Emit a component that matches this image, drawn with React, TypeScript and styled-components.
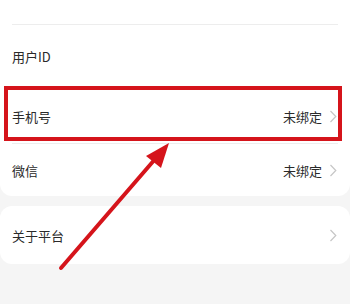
import React from "react";
import styled, { createGlobalStyle } from "styled-components";

const Global = createGlobalStyle`
  html, body { margin: 0; padding: 0; background: #f5f5f5; }
  body { font-family: "Noto Sans CJK SC", "Noto Sans", sans-serif; }
`;

const Page = styled.div`
  position: relative;
  width: 350px;
  height: 304px;
  overflow: hidden;
  background: #f5f5f5;
  display: flex;
  flex-direction: column;
`;

const Card = styled.div<{ $top?: number }>`
  background: #ffffff;
  border-radius: ${(p) => (p.$top !== undefined ? "12px" : "0 0 12px 12px")};
  margin-top: ${(p) => p.$top ?? 0}px;
  display: flex;
  flex-direction: column;
`;

const TopSpace = styled.div`
  height: 24px;
`;

const Divider = styled.div`
  height: 1px;
  margin: 0 12px;
  background: #ededed;
`;

const Row = styled.div<{ $h: number }>`
  height: ${(p) => p.$h}px;
  display: flex;
  align-items: center;
  padding: 0 13px 0 12px;
  gap: 7px;
`;

const Label = styled.span`
  flex: 1;
  font-size: 13px;
  color: #2a2a2a;
`;

const Value = styled.span`
  font-size: 13px;
  color: #2a2a2a;
`;

const Chevron = () => (
  <svg width="8" height="13" viewBox="0 0 8 13">
    <path d="M1.5 1 L6.8 6.5 L1.5 12" fill="none" stroke="#c6c6c6" strokeWidth="1.2" />
  </svg>
);

const Highlight = styled.div`
  position: absolute;
  left: 4px;
  top: 86px;
  width: 338px;
  height: 55px;
  box-sizing: border-box;
  border: 4px solid #d5141b;
`;

const ArrowLayer = styled.svg`
  position: absolute;
  left: 0;
  top: 0;
  pointer-events: none;
`;

export default function App() {
  return (
    <>
      <Global />
      <Page>
        <Card>
          <TopSpace />
          <Divider />
          <Row $h={63}>
            <Label>用户ID</Label>
          </Row>
          <Divider />
          <Row $h={54}>
            <Label>手机号</Label>
            <Value>未绑定</Value>
            <Chevron />
          </Row>
          <Divider />
          <Row $h={52}>
            <Label>微信</Label>
            <Value>未绑定</Value>
            <Chevron />
          </Row>
        </Card>
        <Card $top={10}>
          <Row $h={58}>
            <Label>关于平台</Label>
            <Chevron />
          </Row>
        </Card>
        <Highlight />
        <ArrowLayer width="350" height="304" viewBox="0 0 350 304">
          <line x1="61" y1="268" x2="156" y2="158" stroke="#d5141b" strokeWidth="4" strokeLinecap="round" />
          <polygon points="169,143 146,156 161,168" fill="#d5141b" />
        </ArrowLayer>
      </Page>
    </>
  );
}
